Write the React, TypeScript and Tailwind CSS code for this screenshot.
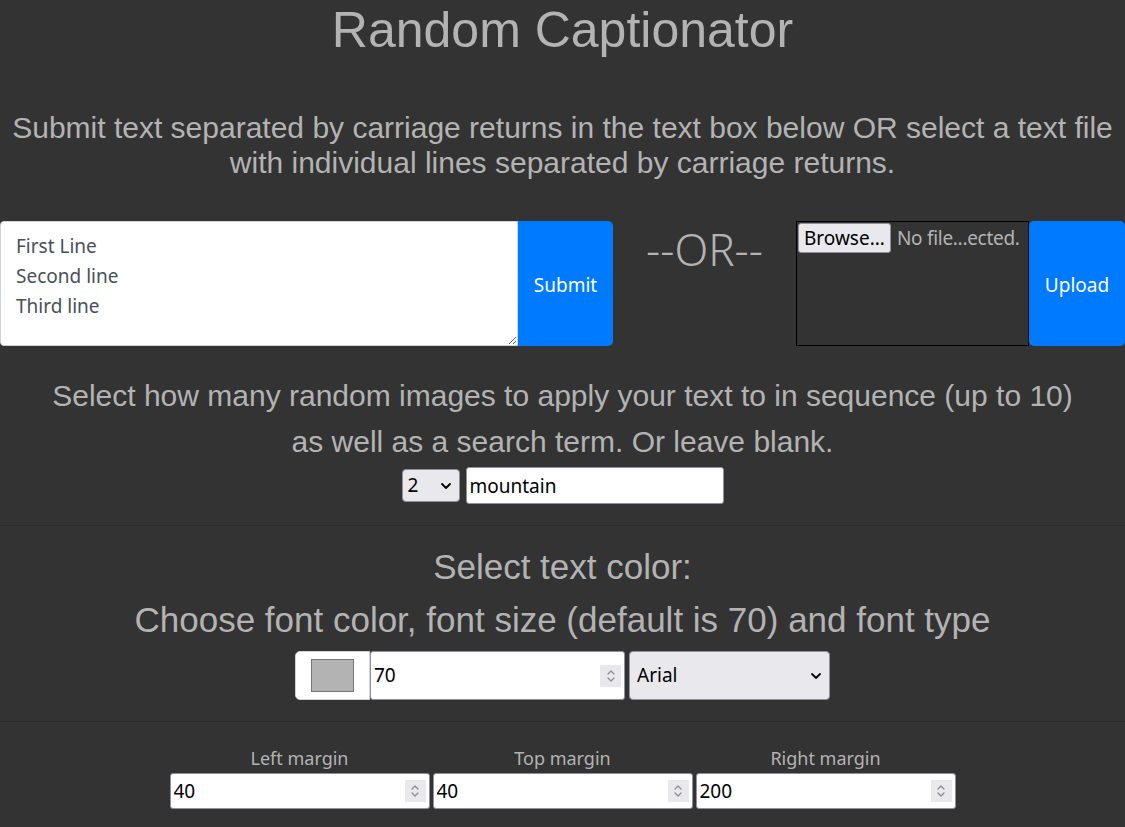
import { useState } from 'react';

const sans = "font-['Liberation_Sans',Arial,sans-serif]";
const ui = "font-['Noto_Sans','Open_Sans',sans-serif]";

function Chevron({ className }: { className?: string }) {
  return (
    <svg viewBox="0 0 12 8" className={className} fill="none" stroke="currentColor" strokeWidth={1.8} strokeLinecap="round" strokeLinejoin="round">
      <path d="M2 2l4 4 4-4" />
    </svg>
  );
}

function Spinner() {
  return (
    <div className="flex h-[22px] w-[21px] shrink-0 flex-col items-center justify-center bg-[#e9e9ed] text-[#8a8a8a]">
      <svg viewBox="0 0 10 16" className="h-[16px] w-[10px]" fill="none" stroke="currentColor" strokeWidth={1.2} strokeLinecap="round" strokeLinejoin="round">
        <path d="M2 6l3-3 3 3" />
        <path d="M2 10l3 3 3-3" />
      </svg>
    </div>
  );
}

function NumberBox({ value, className }: { value: string; className?: string }) {
  const [v, setV] = useState(value);
  return (
    <div className={`flex items-center rounded-[3px] border border-[#8f8f9d] bg-white pr-[3px] ${className ?? ''}`}>
      <input
        value={v}
        onChange={(e) => setV(e.target.value)}
        className={`${ui} min-w-0 flex-1 bg-transparent pl-[3px] text-[19px] text-black outline-none`}
      />
      <Spinner />
    </div>
  );
}

export default function App() {
  const [lines, setLines] = useState('First Line\nSecond line\nThird line');
  const [term, setTerm] = useState('mountain');

  return (
    <div className="min-h-[827px] w-full bg-[#333333] text-[#b3b3b3]">
      <h1 className={`${sans} text-center text-[50px] leading-[60px]`}>Random Captionator</h1>

      <p className={`${sans} mt-[50px] text-center text-[30px] leading-[35px]`}>
        Submit text separated by carriage returns in the text box below OR select a text file
        <br />
        with individual lines separated by carriage returns.
      </p>

      {/* text / file row */}
      <div className="mt-[41px] flex h-[125px]">
        <textarea
          value={lines}
          onChange={(e) => setLines(e.target.value)}
          className={`${ui} h-full w-[518px] resize rounded-l-[4px] border border-[#ced4da] bg-white px-[15px] pt-[9px] text-[19px] leading-[30px] text-[#495057] outline-none`}
        />
        <button className={`${ui} h-full w-[95px] rounded-r-[5px] bg-[#007bff] pt-[4px] text-[19px] text-white`}>Submit</button>

        <div className={`${ui} flex-1 pt-[2px] text-center text-[44px] font-light leading-[52px]`}>--OR--</div>

        <div className="flex h-full w-[233px] items-start gap-[6px] border border-black p-[1px]">
          <button className={`${ui} rounded-[3px] border border-[#8f8f9d] bg-[#e9e9ed] px-[5px] text-[19px] leading-[28px] text-black`}>
            Browse...
          </button>
          <span className={`${ui} text-[19px] leading-[30px] tracking-[-0.3px] whitespace-nowrap`}>No file...ected.</span>
        </div>
        <button className={`${ui} h-full w-[96px] rounded-[5px] bg-[#007bff] pt-[4px] text-[19px] text-white`}>Upload</button>
      </div>

      {/* how many images */}
      <p className={`${sans} mt-[27px] text-center text-[30px] leading-[46px]`}>
        Select how many random images to apply your text to in sequence (up to 10)
        <br />
        as well as a search term. Or leave blank.
      </p>
      <div className="mt-[2px] flex items-center justify-center gap-[6px]">
        <div className="relative h-[33px] w-[58px]">
          <select
            defaultValue="2"
            className={`${ui} h-full w-full appearance-none rounded-[4px] border border-[#8f8f9d] bg-[#e9e9ed] pl-[5px] text-[19px] text-black outline-none`}
          >
            {Array.from({ length: 10 }, (_, i) => (
              <option key={i}>{i + 1}</option>
            ))}
          </select>
          <Chevron className="pointer-events-none absolute right-[8px] top-[13px] h-[8px] w-[12px] text-black" />
        </div>
        <input
          value={term}
          onChange={(e) => setTerm(e.target.value)}
          className={`${ui} h-[37px] w-[258px] rounded-[3px] border border-[#8f8f9d] bg-white px-[3px] text-[19px] text-black outline-none`}
        />
      </div>

      <hr className="mt-[21px] border-t border-[#2c2c2c]" />

      {/* text colour */}
      <p className={`${sans} mt-[21px] text-center text-[35px] leading-[40px]`}>Select text color:</p>
      <p className={`${sans} mt-[13px] text-center text-[35px] leading-[40px]`}>
        Choose font color, font size (default is 70) and font type
      </p>
      <div className="mt-[11px] flex justify-center">
        <div className="flex h-[49px] w-[75px] items-center justify-center rounded-l-[5px] border border-[#ced4da] bg-white">
          <div className="h-[33px] w-[43px] border border-[#767676] bg-[#b3b3b3]" />
        </div>
        <NumberBox value="70" className="h-[49px] w-[255px]" />
        <div className="relative ml-[4px] h-[49px] w-[201px]">
          <select
            defaultValue="Arial"
            className={`${ui} h-full w-full appearance-none rounded-[4px] border border-[#8f8f9d] bg-[#e9e9ed] pl-[7px] text-[19px] text-black outline-none`}
          >
            <option>Arial</option>
            <option>Impact</option>
            <option>Times New Roman</option>
          </select>
          <Chevron className="pointer-events-none absolute right-[8px] top-[21px] h-[8px] w-[12px] text-black" />
        </div>
      </div>

      <hr className="mt-[21px] border-t border-[#2c2c2c]" />

      {/* margins */}
      <div className="mt-[22px] flex justify-center gap-[3px]">
        {[
          ['Left margin', '40'],
          ['Top margin', '40'],
          ['Right margin', '200'],
        ].map(([label, value]) => (
          <div key={label} className="flex w-[260px] flex-col items-center">
            <label className={`${ui} text-[18px] leading-[29px]`}>{label}</label>
            <NumberBox value={value} className="h-[36px] w-full" />
          </div>
        ))}
      </div>
    </div>
  );
}
